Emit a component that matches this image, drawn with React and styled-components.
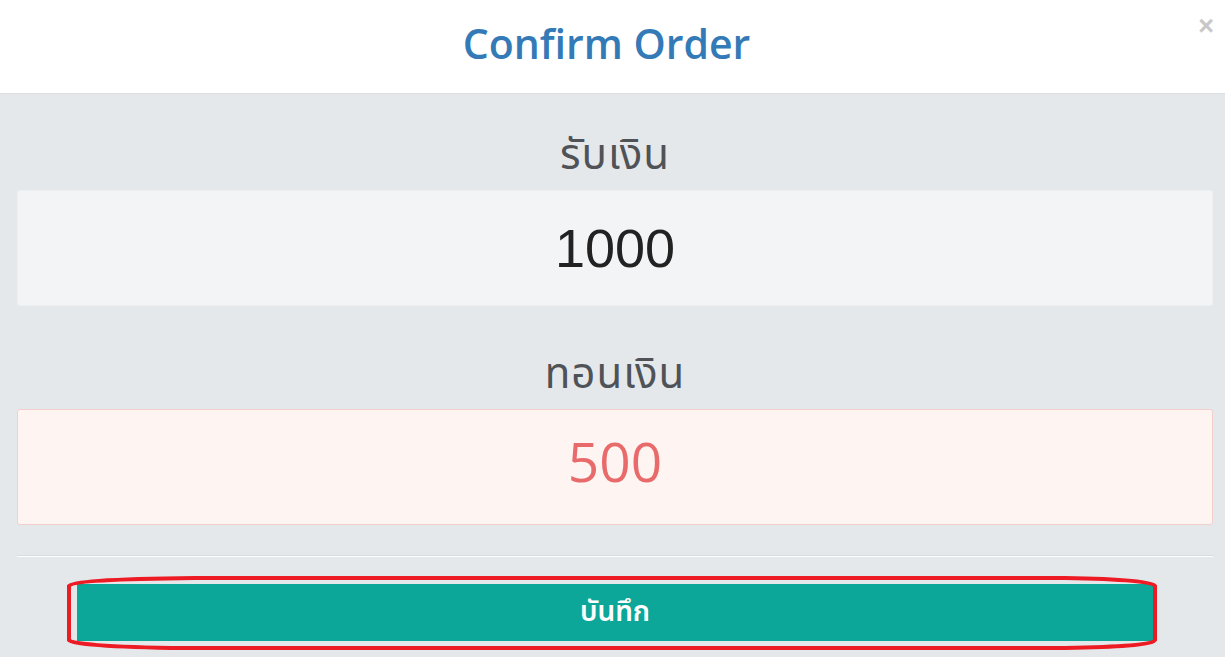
import React from 'react';
import styled, { createGlobalStyle } from 'styled-components';

const GlobalStyle = createGlobalStyle`
  html, body {
    margin: 0;
    padding: 0;
    background: #e5e8eb;
  }
  body {
    font-family: "Open Sans", "Noto Sans", sans-serif;
  }
`;

const thai = '"Noto Sans Thai", "Open Sans", "Noto Sans", sans-serif';

const Modal = styled.div`
  width: 1225px;
  height: 657px;
  overflow: hidden;
  background: #e5e8eb;
`;

const Header = styled.div`
  position: relative;
  height: 93px;
  background: #ffffff;
  border-bottom: 1px solid #dde0e3;
  display: flex;
  align-items: center;
  justify-content: center;
`;

const Title = styled.h2`
  margin: 0 12px 8px 0;
  font-size: 41px;
  font-weight: 600;
  color: #337ab7;
`;

const Close = styled.span`
  position: absolute;
  top: 11px;
  right: 11px;
  font-family: "Liberation Sans", Arial, sans-serif;
  font-size: 27px;
  font-weight: 700;
  color: #c8c8c8;
`;

const Body = styled.div`
  padding: 38px 12px 0 17px;
  display: flex;
  flex-direction: column;
`;

const Label = styled.div`
  font-family: ${thai};
  font-size: 42px;
  font-weight: 400;
  letter-spacing: 1px;
  line-height: 48px;
  color: #4f5256;
  text-align: center;
  margin: ${p => (p.$first ? '0' : '45px')} 0 10px;
`;

const Amount = styled.div`
  border-radius: 3px;
  border: 1px solid ${p => (p.$change ? '#f2cfcd' : '#eef0f2')};
  background: ${p => (p.$change ? '#fef5f3' : '#f3f4f6')};
  color: ${p => (p.$change ? '#e86a6b' : '#222222')};
  font-family: ${p => (p.$change ? '"Open Sans", sans-serif' : '"Liberation Sans", Arial, sans-serif')};
  font-size: ${p => (p.$change ? '55px' : '54px')};
  padding-bottom: ${p => (p.$change ? '14px' : '0')};
  box-sizing: border-box;
  height: 116px;
  display: flex;
  align-items: center;
  justify-content: center;
`;

const Divider = styled.div`
  margin-top: 30px;
  height: 1px;
  background: #d8dbde;
  border-bottom: 1px solid #ffffff;
`;

const ButtonRow = styled.div`
  position: relative;
  margin: 27px 60px 0 60px;
`;

const SaveButton = styled.button`
  width: 100%;
  height: 57px;
  border: none;
  border-radius: 0;
  background: #0ca798;
  color: #ffffff;
  font-family: ${thai};
  font-size: 28px;
  font-weight: 600;
  cursor: pointer;
`;

const Highlight = styled.svg`
  position: absolute;
  left: -12px;
  top: -10px;
  width: 1096px;
  height: 78px;
  pointer-events: none;
`;

export default function App() {
  return (
    <>
      <GlobalStyle />
      <Modal>
        <Header>
          <Title>Confirm Order</Title>
          <Close>×</Close>
        </Header>
        <Body>
          <Label $first>รับเงิน</Label>
          <Amount>1000</Amount>
          <Label>ทอนเงิน</Label>
          <Amount $change>500</Amount>
          <Divider />
          <ButtonRow>
            <SaveButton>บันทึก</SaveButton>
            <Highlight viewBox="0 0 1096 78">
              <path
                d="M130 4 H1000 C1060 5 1088 8 1090 12 V66 C1088 71 1050 73 1000 74 H120 C40 73 6 70 4 66 V12 C6 8 40 5 130 4 Z"
                fill="none"
                stroke="#ed1c24"
                strokeWidth="4"
              />
            </Highlight>
          </ButtonRow>
        </Body>
      </Modal>
    </>
  );
}
